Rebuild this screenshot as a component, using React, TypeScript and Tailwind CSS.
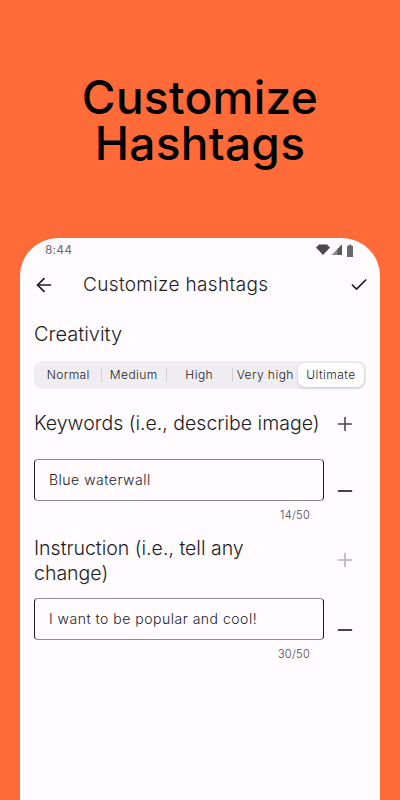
import { ArrowLeft, Check, Minus, Plus } from "lucide-react"

const inter = "font-['Inter','Liberation_Sans',sans-serif]"

const segments = ["Normal", "Medium", "High", "Very high"]

const StatusBar: React.FC = () => (
  <div className="flex h-[24px] items-center justify-between pl-[25px] pr-[24px]">
    <span className="text-[12px] leading-none tracking-[0.2px] text-[#6b6b6f]">8:44</span>
    <div className="flex items-center gap-[1px]">
      <svg width="14" height="12" viewBox="0 0 14 12">
        <path d="M0 3.6 3 .6h8l3 3L7 11z" fill="#4a4a4d" />
      </svg>
      <svg width="12" height="12" viewBox="0 0 12 12">
        <path d="M0.5 11 11 0.5V11z" fill="#8a8a8d" />
        <path d="M6.5 11V5L11 .5V11z" fill="#58585b" />
      </svg>
      <svg width="12" height="13" viewBox="0 0 12 13">
        <path d="M3 2h1.5V.8h3V2H9v11H3z" fill="#69696c" />
      </svg>
    </div>
  </div>
)

const Field: React.FC<{ value: string; count: string }> = ({ value, count }) => (
  <div className="flex items-start">
    <div className="w-[290px]">
      <div className="flex h-[42px] items-center rounded-[4px] border border-[#1c1b1f] border-t-[#8e8e8e] border-b-[#8e8e8e] px-[14px] pb-[1px] text-[14px] font-[350] tracking-[0.5px] text-[#1c1b1f]">
        {value}
      </div>
      <div className="mt-[4px] pr-[14px] text-right text-[11px] font-light leading-[20px] tracking-[0.3px] text-[#49454f]">{count}</div>
    </div>
    <Minus className="ml-[10px] mt-[21px]" size={22} color="#4d4042" strokeWidth={2} />
  </div>
)

export default function App() {
  return (
    <div className={`flex h-[800px] w-[400px] flex-col overflow-hidden bg-[#ff6a39] ${inter}`}>
      <h1 className="pt-[74px] text-center text-[46px] font-medium leading-[46px] tracking-[0.3px] text-black">
        Customize
        <br />
        Hashtags
      </h1>
      <div className="mx-[20px] mt-[72px] flex-1 rounded-t-[38px] bg-[#fffbff]">
        <StatusBar />
        <div className="flex h-[44px] items-center pl-[13px] pr-[11px] pt-[2px]">
          <ArrowLeft size={22} color="#1c1b1f" strokeWidth={1.9} />
          <span className="ml-[28px] flex-1 text-[19px] font-[350] tracking-[0.35px] text-[#1c1b1f]">Customize hashtags</span>
          <Check size={20} color="#1c1b1f" strokeWidth={2} />
        </div>
        <div className="px-[14px]">
          <div className="mt-[14px] text-[20px] font-[350] leading-[28px] text-[#1c1b1f]">Creativity</div>
          <div className="mt-[13px] flex h-[28px] w-[332px] items-center rounded-[8px] bg-[#efedf1] px-[2px] text-[12px] font-[350] tracking-[0.45px] text-[#1c1b1f]">
            {segments.map((label, i) => (
              <div
                key={label}
                className={`flex h-[14px] w-[65.5px] items-center justify-center whitespace-nowrap ${i < 3 ? "border-r border-[#d3d1d6]" : ""}`}
              >
                {label}
              </div>
            ))}
            <div className="flex h-[24px] flex-1 items-center justify-center rounded-[7px] bg-white shadow-[0_1px_3px_rgba(0,0,0,0.18)]">
              Ultimate
            </div>
          </div>
          <div className="mt-[17px] flex h-[36px] items-center">
            <span className="w-[290px] whitespace-nowrap text-[19.5px] font-[350] text-[#1c1b1f]">Keywords (i.e., describe image)</span>
            <Plus className="ml-[10px]" size={22} color="#4d4042" strokeWidth={1.7} />
          </div>
          <div className="mt-[17px]">
            <Field value="Blue waterwall" count="14/50" />
          </div>
          <div className="mt-[11px] flex items-center">
            <span className="w-[290px] text-[19.5px] font-[350] leading-[25px] text-[#1c1b1f]">
              Instruction (i.e., tell any
              <br />
              change)
            </span>
            <Plus className="ml-[10px] mb-[2px]" size={22} color="#b3b1b4" strokeWidth={1.7} />
          </div>
          <div className="mt-[12px]">
            <Field value="I want to be popular and cool!" count="30/50" />
          </div>
        </div>
      </div>
    </div>
  )
}
